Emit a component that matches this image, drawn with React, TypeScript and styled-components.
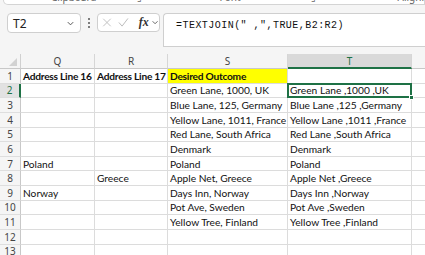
import React from 'react'
import styled, { createGlobalStyle, css } from 'styled-components'

const GlobalStyle = createGlobalStyle`
  html, body {
    margin: 0;
    padding: 0;
    background: #f5f5f5;
    overflow: hidden;
  }
  body {
    font-family: Lato, 'Open Sans', sans-serif;
  }
`

const COLUMNS = ['Q', 'R', 'S', 'T']
const SELECTED_COL = 'T'
const SELECTED_ROW = 2

type Cell = { text: string; bold?: boolean; fill?: string }
type Row = Partial<Record<string, Cell>>

const rows: Row[] = [
  {
    Q: { text: 'Address Line 16', bold: true },
    R: { text: 'Address Line 17', bold: true },
    S: { text: 'Desired Outcome', bold: true, fill: '#ffff00' },
  },
  { S: { text: 'Green Lane, 1000, UK' }, T: { text: 'Green Lane ,1000 ,UK' } },
  { S: { text: 'Blue Lane, 125, Germany' }, T: { text: 'Blue Lane ,125 ,Germany' } },
  { S: { text: 'Yellow Lane, 1011, France' }, T: { text: 'Yellow Lane ,1011 ,France' } },
  { S: { text: 'Red Lane, South Africa' }, T: { text: 'Red Lane ,South Africa' } },
  { S: { text: 'Denmark' }, T: { text: 'Denmark' } },
  { Q: { text: 'Poland' }, S: { text: 'Poland' }, T: { text: 'Poland' } },
  { R: { text: 'Greece' }, S: { text: 'Apple Net, Greece' }, T: { text: 'Apple Net ,Greece' } },
  { Q: { text: 'Norway' }, S: { text: 'Days Inn, Norway' }, T: { text: 'Days Inn ,Norway' } },
  { S: { text: 'Pot Ave, Sweden' }, T: { text: 'Pot Ave ,Sweden' } },
  { S: { text: 'Yellow Tree, Finland' }, T: { text: 'Yellow Tree ,Finland' } },
  {},
  {},
]

const GREEN = '#1e7145'
const GRID = '#dcdcdc'

const Page = styled.div`
  width: 425px;
  height: 255px;
  display: flex;
  flex-direction: column;
  overflow: hidden;
  & > * {
    flex-shrink: 0;
  }
`

const Ribbon = styled.div`
  height: 4px;
  margin-left: 3px;
  background: #ffffff;
  border: 1px solid #d4d4d4;
  border-top: none;
  border-radius: 0 0 0 6px;
  overflow: hidden;
  display: flex;
`

const RibbonLabel = styled.span<{ $left: number }>`
  margin-left: ${(p) => p.$left}px;
  margin-top: -9px;
  font-family: 'Noto Sans', sans-serif;
  font-size: 10px;
  line-height: 12px;
  color: #666;
  white-space: nowrap;
`

const FormulaRow = styled.div`
  display: flex;
  align-items: flex-start;
  padding: 8px 0 0 7px;
  height: 34px;
`

const Box = css`
  box-sizing: border-box;
  background: #ffffff;
  border: 1px solid #cfcfcf;
  border-radius: 4px;
`

const NameBox = styled.div`
  ${Box};
  width: 74px;
  height: 20px;
  display: flex;
  align-items: center;
  justify-content: space-between;
  padding: 0 5px 0 5px;
  font-family: 'Noto Sans', sans-serif;
  font-size: 12px;
  color: #222;
`

const Dots = styled.div`
  width: 16px;
  height: 20px;
  display: flex;
  flex-direction: column;
  align-items: center;
  justify-content: center;
  gap: 2px;
  span {
    width: 2px;
    height: 2px;
    border-radius: 1px;
    background: #555;
  }
`

const FxBox = styled.div`
  ${Box};
  width: 63px;
  height: 19px;
  display: flex;
  align-items: center;
  gap: 6px;
  padding-left: 4px;
`

const FxText = styled.span`
  font-family: 'Liberation Serif', serif;
  font-style: italic;
  font-weight: bold;
  font-size: 12px;
  color: #333;
  margin-left: 4px;
  margin-right: -4px;
`

const FormulaInput = styled.div`
  ${Box};
  border-radius: 4px 0 0 0;
  border-right: none;
  flex: 1;
  margin-left: 3px;
  height: 34px;
  padding: 5px 0 0 12px;
  font-family: 'Liberation Mono', monospace;
  font-size: 10px;
  letter-spacing: 0.46px;
  line-height: 14px;
  color: #111;
  white-space: pre;
`

const Sheet = styled.div`
  margin-top: 7px;
  display: grid;
  grid-template-columns: 21px 74px 73px 120px 124px 1fr;
  grid-template-rows: 15px repeat(13, 14.64px);
  background: #ffffff;
`

const Corner = styled.div`
  position: relative;
  background: #f5f5f5;
  border-right: 1px solid #d0d0d0;
  border-bottom: 1px solid #c8c8c8;
  box-sizing: border-box;
  &::after {
    content: '';
    position: absolute;
    right: 3px;
    bottom: 2px;
    border-left: 8px solid transparent;
    border-bottom: 8px solid #d2d2d2;
  }
`

const ColHead = styled.div<{ $active?: boolean }>`
  box-sizing: border-box;
  display: flex;
  align-items: center;
  justify-content: center;
  font-family: 'Noto Sans', sans-serif;
  font-size: 10px;
  color: ${(p) => (p.$active ? GREEN : '#444')};
  background: ${(p) => (p.$active ? '#d9d9d9' : '#f5f5f5')};
  border-right: 1px solid #d6d6d6;
  border-bottom: ${(p) => (p.$active ? `2px solid ${GREEN}` : '1px solid #c8c8c8')};
`

const RowHead = styled.div<{ $active?: boolean }>`
  box-sizing: border-box;
  display: flex;
  align-items: center;
  justify-content: center;
  font-family: 'Noto Sans', sans-serif;
  font-size: 10px;
  color: ${(p) => (p.$active ? GREEN : '#444')};
  background: ${(p) => (p.$active ? '#e2e2e2' : '#f5f5f5')};
  border-bottom: 1px solid #dedede;
  border-right: ${(p) => (p.$active ? `2px solid ${GREEN}` : '1px solid #c8c8c8')};
`

const CellBox = styled.div<{ $bold?: boolean; $fill?: string; $selected?: boolean }>`
  position: relative;
  box-sizing: border-box;
  display: flex;
  align-items: center;
  padding-left: 2px;
  font-size: 10.2px;
  font-weight: ${(p) => (p.$bold ? 700 : 400)};
  letter-spacing: ${(p) => (p.$bold ? '-0.25px' : '0')};
  color: #111;
  background: ${(p) => p.$fill ?? 'transparent'};
  border-right: 1px solid ${GRID};
  border-bottom: 1px solid ${GRID};
  white-space: nowrap;
  overflow: visible;
  ${(p) =>
    p.$selected &&
    css`
      &::before {
        content: '';
        position: absolute;
        left: -1px;
        top: -1px;
        right: -1px;
        bottom: -1px;
        border: 2px solid ${GREEN};
        pointer-events: none;
      }
      &::after {
        content: '';
        position: absolute;
        right: -3px;
        bottom: -3px;
        width: 5px;
        height: 5px;
        background: ${GREEN};
        border: 1px solid #fff;
        box-sizing: border-box;
        z-index: 1;
      }
    `}
`

const Spacer = styled.div`
  box-sizing: border-box;
  border-bottom: 1px solid ${GRID};
`

const HeadSpacer = styled.div`
  background: #f5f5f5;
  border-bottom: 1px solid #c8c8c8;
`

const Chevron = () => (
  <svg width="9" height="9" viewBox="0 0 10 10">
    <path d="M2 3.5 L5 6.5 L8 3.5" fill="none" stroke="#555" strokeWidth="1.1" />
  </svg>
)

const CancelIcon = () => (
  <svg width="11" height="11" viewBox="0 0 12 12">
    <path d="M1.5 1.5 L10.5 10.5 M10.5 1.5 L1.5 10.5" stroke="#bdbdbd" strokeWidth="1.1" />
  </svg>
)

const EnterIcon = () => (
  <svg width="12" height="11" viewBox="0 0 12 11">
    <path d="M1 5.5 L4.5 9.5 L11 1" fill="none" stroke="#bdbdbd" strokeWidth="1.1" />
  </svg>
)

export default function App() {
  return (
    <Page>
      <GlobalStyle />
      <Ribbon>
        <RibbonLabel $left={47}>Clipboard</RibbonLabel>
        <RibbonLabel $left={40}>⌟</RibbonLabel>
        <RibbonLabel $left={78}>Font</RibbonLabel>
        <RibbonLabel $left={70}>⌟</RibbonLabel>
        <RibbonLabel $left={82}>Alignment</RibbonLabel>
      </Ribbon>
      <FormulaRow>
        <NameBox>
          <span>T2</span>
          <Chevron />
        </NameBox>
        <Dots>
          <span />
          <span />
          <span />
        </Dots>
        <FxBox>
          <CancelIcon />
          <EnterIcon />
          <FxText>fx</FxText>
          <Chevron />
        </FxBox>
        <FormulaInput>{'=TEXTJOIN(" ,",TRUE,B2:R2)'}</FormulaInput>
      </FormulaRow>
      <Sheet>
        <Corner />
        {COLUMNS.map((c) => (
          <ColHead key={c} $active={c === SELECTED_COL}>
            {c}
          </ColHead>
        ))}
        <HeadSpacer />
        {rows.map((row, i) => {
          const n = i + 1
          return (
            <React.Fragment key={n}>
              <RowHead $active={n === SELECTED_ROW}>{n}</RowHead>
              {COLUMNS.map((c) => {
                const cell = row[c]
                return (
                  <CellBox
                    key={c}
                    $bold={cell?.bold}
                    $fill={cell?.fill}
                    $selected={n === SELECTED_ROW && c === SELECTED_COL}
                  >
                    {cell?.text}
                  </CellBox>
                )
              })}
              <Spacer />
            </React.Fragment>
          )
        })}
      </Sheet>
    </Page>
  )
}
